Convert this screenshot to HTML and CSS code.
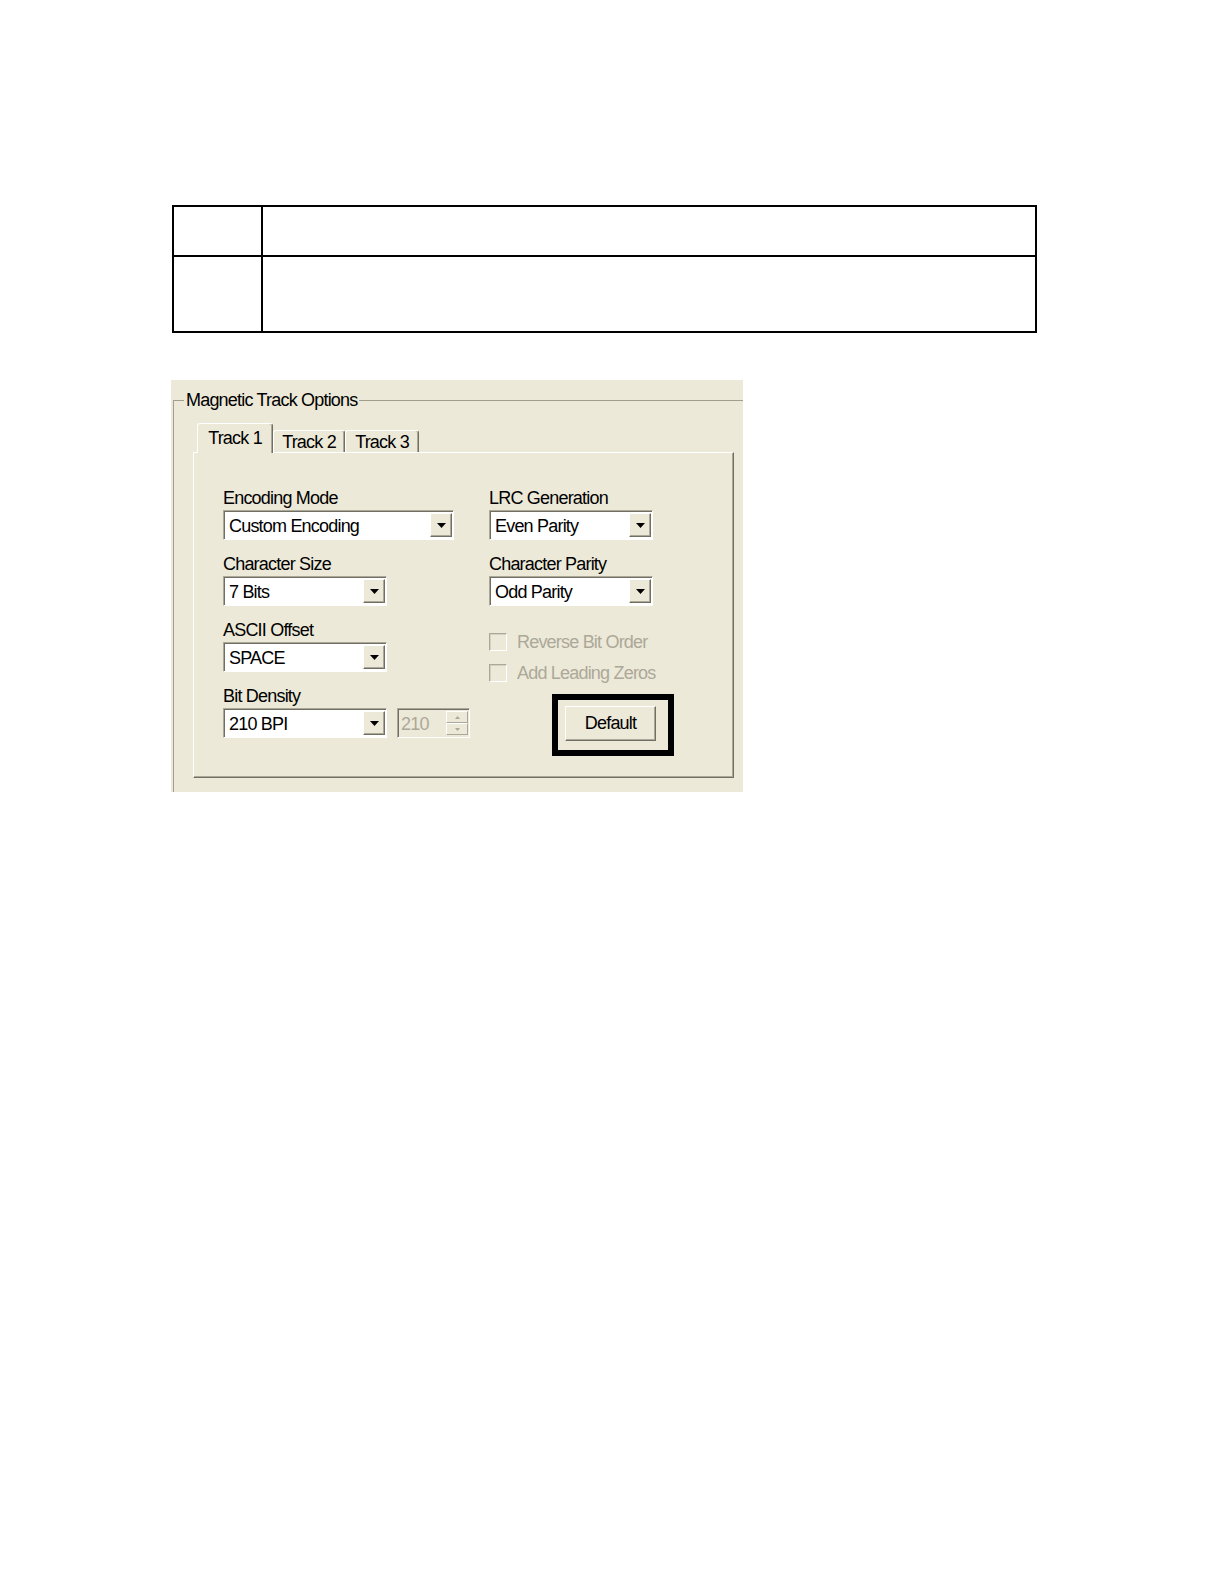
FILE: index.html
```html
<!DOCTYPE html>
<html>
<head>
<meta charset="utf-8">
<title>Magnetic Track Options</title>
<link rel="stylesheet" href="styles.css">
</head>
<body>
<div class="page">
  <div class="spec">
    <div class="cell key"></div>
    <div class="cell val"></div>
    <div class="cell key last"></div>
    <div class="cell val last"></div>
  </div>

  <div class="shot">
    <fieldset class="group">
      <legend>Magnetic Track Options</legend>
      <div class="tabs">
        <div class="tab active t1">Track 1</div>
        <div class="tab t2">Track 2</div>
        <div class="tab t3">Track 3</div>
      </div>
      <div class="panel">
        <div class="col">
          <div class="field">
            <div class="label">Encoding Mode</div>
            <div class="select wide">
              <span class="value">Custom Encoding</span>
              <span class="drop"><svg width="9" height="5" viewBox="0 0 9 5"><polygon points="0,0 9,0 4.5,5" fill="#000"/></svg></span>
            </div>
          </div>
          <div class="field">
            <div class="label">Character Size</div>
            <div class="select">
              <span class="value">7 Bits</span>
              <span class="drop"><svg width="9" height="5" viewBox="0 0 9 5"><polygon points="0,0 9,0 4.5,5" fill="#000"/></svg></span>
            </div>
          </div>
          <div class="field">
            <div class="label">ASCII Offset</div>
            <div class="select">
              <span class="value">SPACE</span>
              <span class="drop"><svg width="9" height="5" viewBox="0 0 9 5"><polygon points="0,0 9,0 4.5,5" fill="#000"/></svg></span>
            </div>
          </div>
          <div class="field">
            <div class="label">Bit Density</div>
            <div class="row">
              <div class="select">
                <span class="value">210 BPI</span>
                <span class="drop"><svg width="9" height="5" viewBox="0 0 9 5"><polygon points="0,0 9,0 4.5,5" fill="#000"/></svg></span>
              </div>
              <div class="spin">
                <span class="spin-value">210</span>
                <span class="spin-btns">
                  <span class="sb"><svg width="5" height="3" viewBox="0 0 5 3"><polygon points="0,3 5,3 2.5,0" fill="#ACA899"/></svg></span>
                  <span class="sb"><svg width="5" height="3" viewBox="0 0 5 3"><polygon points="0,0 5,0 2.5,3" fill="#ACA899"/></svg></span>
                </span>
              </div>
            </div>
          </div>
        </div>

        <div class="col">
          <div class="field">
            <div class="label">LRC Generation</div>
            <div class="select">
              <span class="value">Even Parity</span>
              <span class="drop"><svg width="9" height="5" viewBox="0 0 9 5"><polygon points="0,0 9,0 4.5,5" fill="#000"/></svg></span>
            </div>
          </div>
          <div class="field">
            <div class="label">Character Parity</div>
            <div class="select">
              <span class="value">Odd Parity</span>
              <span class="drop"><svg width="9" height="5" viewBox="0 0 9 5"><polygon points="0,0 9,0 4.5,5" fill="#000"/></svg></span>
            </div>
          </div>
          <div class="check first"><span class="box"></span><span>Reverse Bit Order</span></div>
          <div class="check"><span class="box"></span><span>Add Leading Zeros</span></div>
          <div class="focus"><div class="btn">Default</div></div>
        </div>
      </div>
    </fieldset>
  </div>
</div>
</body>
</html>
```

FILE: styles.css
```css
html, body {
  margin: 0;
  background: #fff;
}

.page {
  padding: 205px 0 0 171px;
}

/* empty specification table */
.spec {
  display: grid;
  grid-template-columns: 89px 772px;
  grid-template-rows: 50px 74px;
  width: 861px;
  border: 2px solid #000;
  margin-left: 1px;
}

.cell {
  box-sizing: border-box;
  border-bottom: 2px solid #000;
}

.cell.key {
  border-right: 2px solid #000;
}

.cell.last {
  border-bottom: none;
}

/* dialog screenshot */
.shot {
  margin-top: 47px;
  width: 572px;
  height: 412px;
  box-sizing: border-box;
  padding-top: 10px;
  background: #ECE9D8;
  overflow: hidden;
  font-family: "Liberation Sans", Arial, sans-serif;
  font-size: 18px;
  letter-spacing: -0.8px;
  color: #000;
}

.group {
  margin: 0 0 0 2px;
  padding: 13px 0 40px 0;
  width: 640px;
  border: 1px solid #A19E8F;
  border-right: none;
}

.group legend {
  margin-left: 10px;
  padding: 0 2px;
  line-height: 20px;
}

.tabs {
  display: flex;
  align-items: flex-end;
  margin-left: 23px;
}

.tab {
  box-sizing: border-box;
  height: 22px;
  padding-top: 1px;
  line-height: 20px;
  text-align: center;
  background: #ECE9D8;
  border-top: 1px solid #fff;
  border-left: 1px solid #fff;
  border-right: 1px solid #716F64;
  box-shadow: inset -1px 0 0 #ACA899;
  border-radius: 3px 3px 0 0;
  white-space: nowrap;
}

.tab.t1 { width: 76px; }
.tab.t2 { width: 72px; }
.tab.t3 { width: 74px; }

.tab.active {
  height: 30px;
  padding-top: 4px;
  margin-bottom: -1px;
  position: relative;
  z-index: 1;
}

.panel {
  margin-left: 19px;
  width: 541px;
  height: 326px;
  box-sizing: border-box;
  padding: 35px 0 0 29px;
  border: 1px solid;
  border-color: #fff #716F64 #716F64 #fff;
  box-shadow: inset -1px -1px 0 #ACA899;
  display: grid;
  grid-template-columns: 266px 1fr;
  align-content: start;
}

.field {
  margin-bottom: 14px;
}

.label {
  line-height: 20px;
  margin-bottom: 2px;
  white-space: nowrap;
}

.select {
  box-sizing: border-box;
  width: 164px;
  height: 30px;
  display: flex;
  padding: 2px 1px 2px 0;
  background: #fff;
  border: 1px solid;
  border-color: #ACA899 #fff #fff #ACA899;
  box-shadow: inset 1px 1px 0 #716F64;
}

.select.wide {
  width: 231px;
}

.value {
  flex: 1;
  padding: 1px 0 0 5px;
  line-height: 24px;
  white-space: nowrap;
  overflow: hidden;
}

.drop {
  box-sizing: border-box;
  width: 22px;
  height: 24px;
  display: flex;
  align-items: center;
  justify-content: center;
  background: #ECE9D8;
  border: 1px solid;
  border-color: #fff #716F64 #716F64 #fff;
  box-shadow: inset -1px -1px 0 #ACA899;
}

.row {
  display: flex;
  gap: 10px;
}

.spin {
  box-sizing: border-box;
  width: 73px;
  height: 30px;
  display: flex;
  padding: 2px 1px 2px 0;
  background: #ECE9D8;
  border: 1px solid;
  border-color: #ACA899 #fff #fff #ACA899;
  box-shadow: inset 1px 1px 0 #716F64;
}

.spin-value {
  flex: 1;
  padding: 1px 0 0 3px;
  line-height: 24px;
  color: #ACA899;
}

.spin-btns {
  width: 22px;
  display: flex;
  flex-direction: column;
}

.sb {
  flex: 1;
  box-sizing: border-box;
  display: flex;
  align-items: center;
  justify-content: center;
  border: 1px solid;
  border-color: #fff #ACA899 #ACA899 #fff;
}

.check {
  display: flex;
  align-items: center;
  gap: 10px;
  height: 20px;
  color: #ACA899;
  white-space: nowrap;
}

.check.first {
  margin-top: 26px;
}

.check + .check {
  margin-top: 11px;
}

.box {
  box-sizing: border-box;
  width: 18px;
  height: 18px;
  border: 1px solid;
  border-color: #ACA899 #fff #fff #ACA899;
  box-shadow: inset 1px 1px 0 #D4D1C3;
}

.focus {
  box-sizing: border-box;
  margin: 11px 0 0 63px;
  width: 122px;
  height: 62px;
  padding: 6px 0 0 7px;
  border: 6px solid #000;
}

.btn {
  box-sizing: border-box;
  width: 91px;
  height: 35px;
  line-height: 33px;
  text-align: center;
  background: #ECE9D8;
  border: 1px solid;
  border-color: #fff #716F64 #716F64 #fff;
  box-shadow: inset -1px -1px 0 #ACA899;
}
```
